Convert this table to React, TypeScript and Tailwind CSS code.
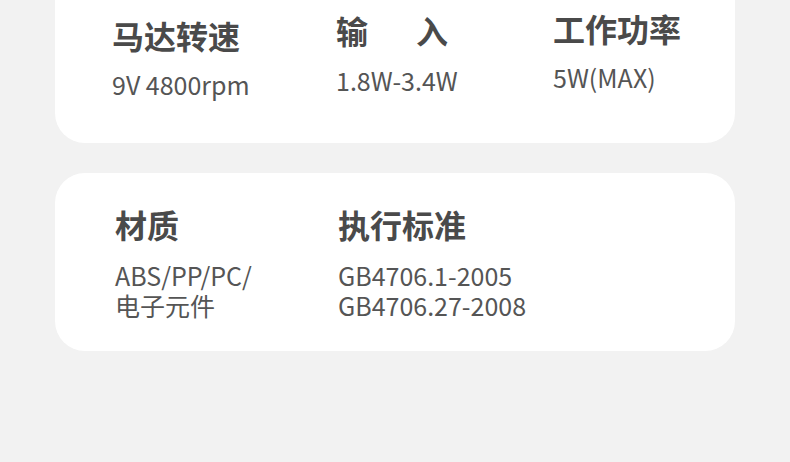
import React from "react";

const font = { fontFamily: '"Noto Sans CJK SC", "Noto Sans", sans-serif' };

export default function App() {
  return (
    <div className="w-[790px] h-[462px] bg-[#f2f2f2] overflow-hidden" style={font}>
      <div className="mx-[55px] h-[143px] bg-white rounded-b-[30px] flex pl-[57px]">
        <div className="w-[224px] pt-[15px]">
          <div className="text-[32px] leading-[40px] font-bold text-[#4a4a4a]">马达转速</div>
          <div className="mt-[14px] text-[25px] leading-[30px] text-[#555]">9V 4800rpm</div>
        </div>
        <div className="w-[217px] pt-[10px]">
          <div className="text-[32px] leading-[40px] font-bold text-[#4a4a4a] flex gap-[48px]">
            <span>输</span>
            <span>入</span>
          </div>
          <div className="mt-[15px] text-[25px] leading-[30px] text-[#555]">1.8W-3.4W</div>
        </div>
        <div className="pt-[8px]">
          <div className="text-[32px] leading-[40px] font-bold text-[#4a4a4a]">工作功率</div>
          <div className="mt-[14px] text-[25px] leading-[30px] text-[#555]">5W(MAX)</div>
        </div>
      </div>
      <div className="mx-[55px] mt-[30px] h-[178px] bg-white rounded-[30px] flex pl-[60px] pt-[31px]">
        <div className="w-[223px]">
          <div className="text-[32px] leading-[40px] font-bold text-[#4a4a4a]">材质</div>
          <div className="mt-[16px] text-[25px] leading-[30px] text-[#555]">
            <div>ABS/PP/PC/</div>
            <div>电子元件</div>
          </div>
        </div>
        <div>
          <div className="text-[32px] leading-[40px] font-bold text-[#4a4a4a]">执行标准</div>
          <div className="mt-[16px] text-[25px] leading-[30px] text-[#555]">
            <div>GB4706.1-2005</div>
            <div>GB4706.27-2008</div>
          </div>
        </div>
      </div>
    </div>
  );
}
